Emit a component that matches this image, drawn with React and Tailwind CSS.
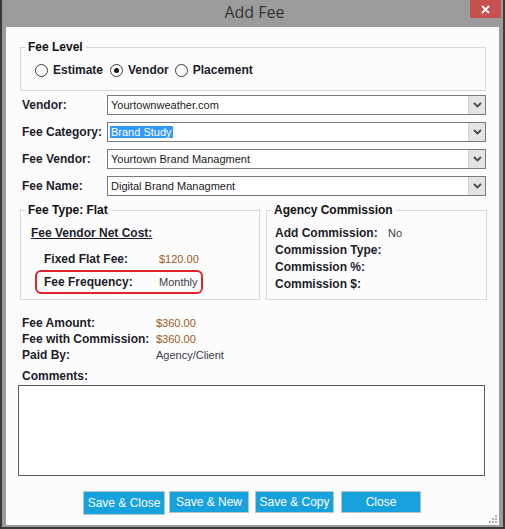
import React from 'react';

const FONT = { fontFamily: '"Liberation Sans", Arial, sans-serif' };

function Radio({ checked, label }) {
  return (
    <div className="flex items-center">
      <span className="w-[13px] h-[13px] rounded-full border border-[#3c3c3c] bg-white flex items-center justify-center">
        {checked && <span className="w-[5px] h-[5px] rounded-full bg-[#1a1a1a]" />}
      </span>
      <span className="ml-[5px] font-bold text-[12px] leading-[14px] text-[#1c1c2a]">{label}</span>
    </div>
  );
}

function Combo({ label, value, selected }) {
  return (
    <div className="flex items-center h-[20px]">
      <div className="w-[85px] font-bold text-[12px] text-[#1c1c2a]">{label}</div>
      <div className="w-[379px] h-[20px] border border-[#7a7a7a] bg-white flex items-center">
        <div className="flex-1 pl-[2px] text-[11px] text-[#1a1a1a]">
          <span className={selected ? 'bg-[#3399ff] text-white px-[1px]' : 'px-[1px]'}>{value}</span>
        </div>
        <div className="w-[17px] h-[18px] bg-[#e4e4e4] border-l border-[#d2d2d2] flex items-center justify-center">
          <svg width="9" height="6" viewBox="0 0 9 6">
            <polyline points="1,1 4.5,4.5 8,1" fill="none" stroke="#4a4a4a" strokeWidth="1.8" />
          </svg>
        </div>
      </div>
    </div>
  );
}

function Group({ title, className, children }) {
  return (
    <fieldset className={`border border-[#d8d8d8] ${className}`}>
      <legend className="ml-[4px] px-[3px] font-bold text-[12px] leading-[14px] text-[#111]">{title}</legend>
      {children}
    </fieldset>
  );
}

export default function App() {
  return (
    <div className="w-[505px] h-[529px] bg-[#3a3a3a] pl-[2px] pr-[2px] pb-[2px]" style={FONT}>
      <div className="h-full bg-[#9b9b9b] flex flex-col pl-[4px] pr-[4px] pb-[2px]">
        {/* title bar */}
        <div className="h-[27px] relative flex items-center justify-center pb-[3px]">
          <span className="text-[16px] text-[#343434] pl-[4px]" style={{ fontFamily: '"Open Sans", "Noto Sans", sans-serif' }}>Add Fee</span>
          <div className="absolute right-[-2px] top-0 w-[31px] h-[18px] bg-[#c75050] flex items-center justify-center">
            <svg width="9" height="9" viewBox="0 0 9 9">
              <path d="M1 1 L8 8 M8 1 L1 8" stroke="#fff" strokeWidth="1.8" />
            </svg>
          </div>
        </div>

        {/* client area */}
        <div className="flex-1 bg-[#fcfcfc] relative pt-[13px]">
          <Group title="Fee Level" className="ml-[14px] w-[466px]">
            <div className="flex pl-[14px] pt-[9px] pb-[13px]">
              <Radio label="Estimate" />
              <div className="ml-[7px]"><Radio checked label="Vendor" /></div>
              <div className="ml-[6px]"><Radio label="Placement" /></div>
            </div>
          </Group>

          <div className="ml-[16px] mt-[4px] flex flex-col gap-[7px]">
            <Combo label="Vendor:" value="Yourtownweather.com" />
            <Combo label="Fee Category:" value="Brand Study" selected />
            <Combo label="Fee Vendor:" value="Yourtown Brand Managment" />
            <Combo label="Fee Name:" value="Digital Brand Managment" />
          </div>

          <div className="ml-[14px] mt-[7px] flex gap-[6px]">
            <Group title="Fee Type: Flat" className="w-[240px] h-[97px]">
              <div className="pl-[10px] pt-[9px]">
                <div className="font-bold text-[12px] leading-[14px] underline text-[#1c1c2a]">Fee Vendor Net Cost:</div>
                <div className="flex mt-[12px] ml-[13px] text-[12px] leading-[14px]">
                  <span className="w-[115px] font-bold text-[#1c1c2a]">Fixed Flat Fee:</span>
                  <span className="text-[11px] text-[#9a5a1a]">$120.00</span>
                </div>
                <div className="mt-[4px] ml-[4px] w-[168px] h-[24px] border-2 border-[#e0242a] rounded-[6px] flex items-center pl-[7px] text-[12px]">
                  <span className="w-[115px] font-bold text-[#1c1c2a]">Fee Frequency:</span>
                  <span className="text-[11px] text-[#3c3c4c]">Monthly</span>
                </div>
              </div>
            </Group>
            <Group title="Agency Commission" className="w-[221px] h-[97px]">
              <div className="pl-[8px] pt-[8px] text-[12px] leading-[17px] text-[#1c1c2a]">
                <div className="flex">
                  <span className="w-[113px] font-bold">Add Commission:</span>
                  <span className="text-[11px] text-[#3c3c4c]">No</span>
                </div>
                <div className="font-bold">Commission Type:</div>
                <div className="font-bold">Commission %:</div>
                <div className="font-bold">Commission $:</div>
              </div>
            </Group>
          </div>

          <div className="ml-[16px] mt-[15px] text-[12px] leading-[16px] text-[#1c1c2a]">
            <div className="flex">
              <span className="w-[134px] font-bold">Fee Amount:</span>
              <span className="text-[11px] text-[#9a5a1a]">$360.00</span>
            </div>
            <div className="flex">
              <span className="w-[134px] font-bold">Fee with Commission:</span>
              <span className="text-[11px] text-[#9a5a1a]">$360.00</span>
            </div>
            <div className="flex">
              <span className="w-[134px] font-bold">Paid By:</span>
              <span className="text-[11px] text-[#3c3c4c]">Agency/Client</span>
            </div>
            <div className="mt-[6px] font-bold leading-[14px]">Comments:</div>
          </div>

          <div className="ml-[12px] mt-[2px] w-[467px] h-[91px] border border-[#5a5a5a] bg-white" />

          <div className="flex items-start mt-[15px] ml-[77px] text-[12px] text-white">
            <button className="w-[82px] h-[24px] bg-[#17a2dd] border border-[#b8c4cc]">Save &amp; Close</button>
            <button className="ml-[4px] w-[80px] h-[22px] bg-[#17a2dd] border border-[#b8c4cc]">Save &amp; New</button>
            <button className="ml-[6px] w-[79px] h-[22px] bg-[#17a2dd] border border-[#b8c4cc]">Save &amp; Copy</button>
            <button className="ml-[7px] w-[80px] h-[22px] bg-[#17a2dd] border border-[#b8c4cc]">Close</button>
          </div>

          <svg className="absolute right-[1px] bottom-[1px]" width="10" height="10" viewBox="0 0 10 10">
            <rect x="7" y="1" width="2" height="2" fill="#b0b0b0" />
            <rect x="4" y="4" width="2" height="2" fill="#b0b0b0" />
            <rect x="7" y="4" width="2" height="2" fill="#b0b0b0" />
            <rect x="1" y="7" width="2" height="2" fill="#b0b0b0" />
            <rect x="4" y="7" width="2" height="2" fill="#b0b0b0" />
            <rect x="7" y="7" width="2" height="2" fill="#b0b0b0" />
          </svg>
        </div>
      </div>
    </div>
  );
}
